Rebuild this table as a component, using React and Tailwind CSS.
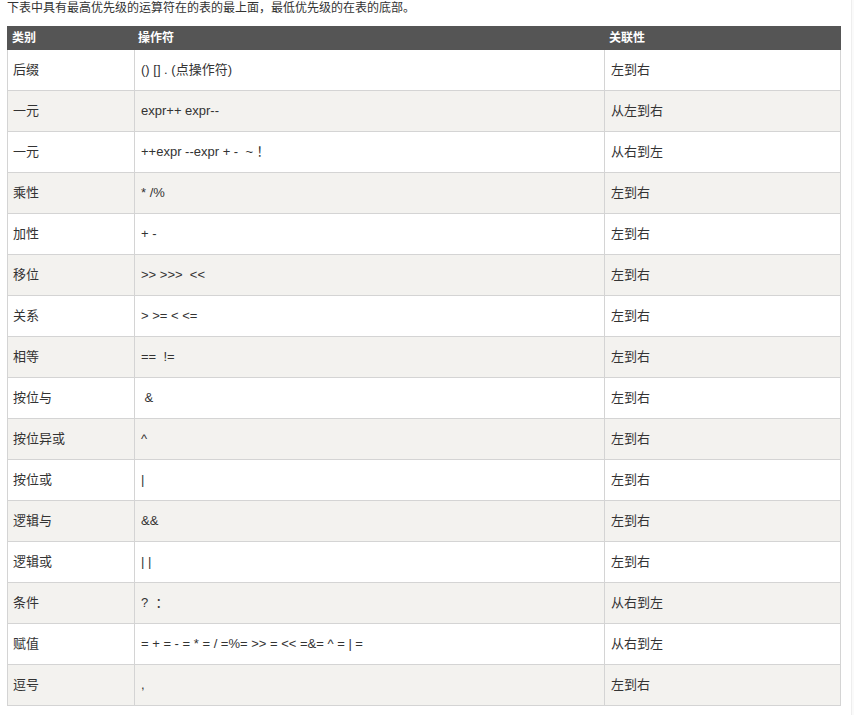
import React from "react";

const rows = [
  ["后缀", "() [] . (点操作符)", "左到右"],
  ["一元", "expr++ expr--", "从左到右"],
  ["一元", "++expr --expr + -  ~ ！", "从右到左"],
  ["乘性", "* /%", "左到右"],
  ["加性", "+ -", "左到右"],
  ["移位", ">> >>>  <<", "左到右"],
  ["关系", "> >= < <=", "左到右"],
  ["相等", "==  !=", "左到右"],
  ["按位与", " &", "左到右"],
  ["按位异或", "^", "左到右"],
  ["按位或", "|", "左到右"],
  ["逻辑与", "&&", "左到右"],
  ["逻辑或", "| |", "左到右"],
  ["条件", "?  ：", "从右到左"],
  ["赋值", "= + = - = * = / =%= >> = << =&= ^ = | =", "从右到左"],
  ["逗号", ",", "左到右"],
];

export default function App() {
  return (
    <div
      className="flex w-[854px] min-h-[715px] bg-white text-[12px] text-[#333]"
      style={{ fontFamily: '"Liberation Sans", "Noto Sans CJK SC", sans-serif' }}
    >
      <div className="w-[851px] pl-[7px]">
        <div className="h-[26px] leading-[17px]">
          下表中具有最高优先级的运算符在的表的最上面，最低优先级的在表的底部。
        </div>
        <div className="w-[834px]">
          <div className="flex h-[24px] items-center bg-[#555555] font-bold text-white">
            <div className="w-[127px] pl-[5px]">类别</div>
            <div className="w-[470px] pl-[4px]">操作符</div>
            <div className="w-[237px] pl-[5px]">关联性</div>
          </div>
          {rows.map((r, i) => (
            <div
              key={i}
              className={`flex h-[41px] border-x border-b border-[#d4d4d4] text-[13px] ${
                i % 2 === 1 ? "bg-[#f3f2ef]" : "bg-white"
              }`}
            >
              <div className="flex w-[126px] items-center pl-[5px]">{r[0]}</div>
              <div className="flex w-[470px] items-center whitespace-pre border-l border-[#d4d4d4] pl-[6px]">
                {r[1]}
              </div>
              <div className="flex w-[236px] items-center border-l border-[#d4d4d4] pl-[6px]">
                {r[2]}
              </div>
            </div>
          ))}
        </div>
      </div>
      <div className="w-[3px] border-l border-[#eeeeee] bg-[#fafafa]" />
    </div>
  );
}
